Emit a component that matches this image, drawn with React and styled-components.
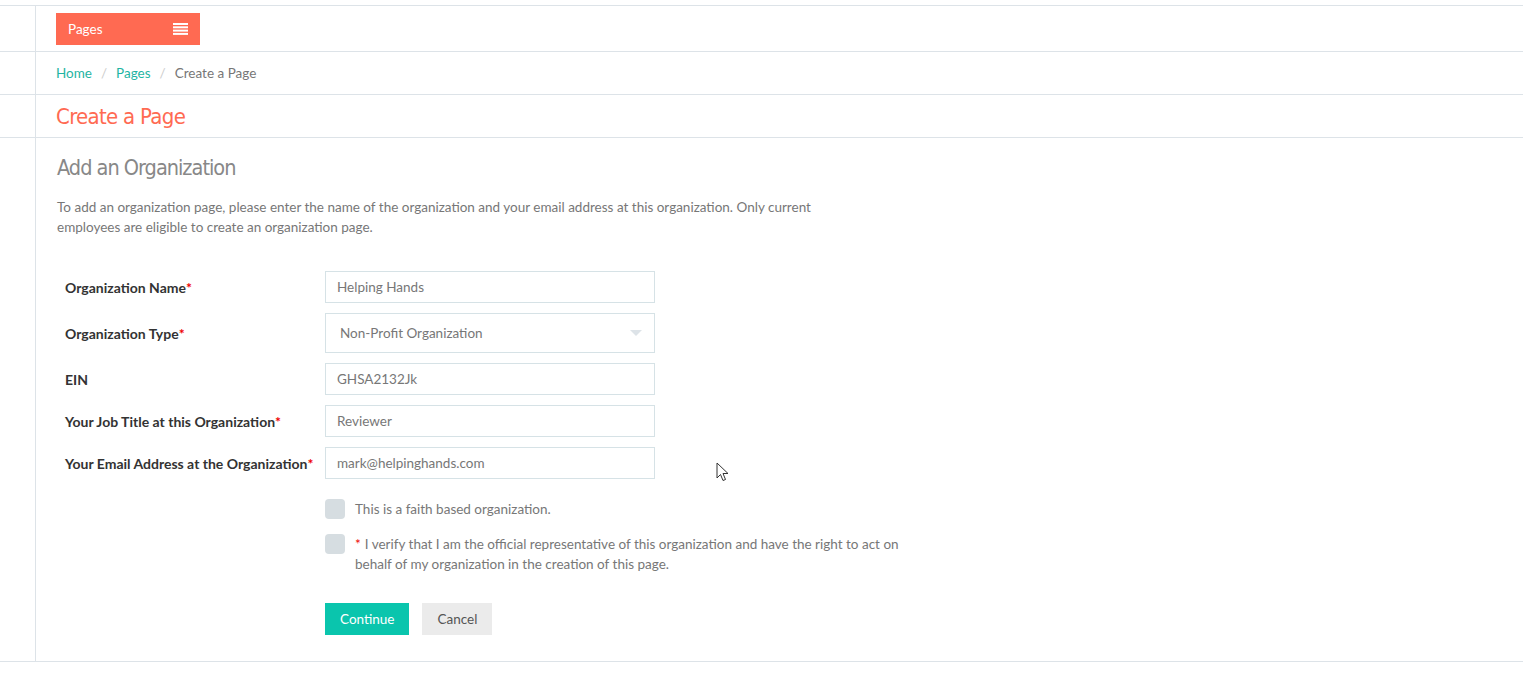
import React from "react";
import styled, { createGlobalStyle } from "styled-components";

const Global = createGlobalStyle`
  html, body { margin: 0; padding: 0; background: #fff; }
  body { font-family: Lato, "Open Sans", sans-serif; color: #777; }
  * { box-sizing: border-box; }
`;

const Page = styled.div`
  position: relative;
  padding-top: 5px;
  width: 1523px;
  min-height: 675px;
`;

const Row = styled.div`
  display: flex;
  border-top: 1px solid #dde3e8;
  ${(p) => p.$last && `border-bottom: 1px solid #dde3e8;`}
`;

const Gutter = styled.div`
  width: 36px;
  flex: none;
  border-right: 1px solid #dde3e8;
`;

const Cell = styled.div`
  flex: 1;
  padding: ${(p) => p.$pad || "0 0 0 20px"};
  height: ${(p) => (p.$h ? p.$h + "px" : "auto")};
  display: flex;
  flex-direction: column;
  justify-content: ${(p) => (p.$center ? "center" : "flex-start")};
`;

const PagesButton = styled.div`
  width: 144px;
  height: 32px;
  background: #ff6a52;
  color: #fff;
  font-size: 13.5px;
  display: flex;
  align-items: center;
  justify-content: space-between;
  padding: 0 12px;
`;

const Crumbs = styled.div`
  font-size: 13.5px;
  display: flex;
  gap: 9px;
  color: #777;
`;
const CrumbLink = styled.span`
  color: #1fb5a3;
`;
const Sep = styled.span`
  color: #ccc;
`;

const headingFont = `"DejaVu Sans Condensed", "Liberation Sans Narrow", sans-serif`;

const Title = styled.h1`
  margin: 0;
  font-family: ${headingFont};
  font-weight: normal;
  font-size: 22px;
  letter-spacing: -0.7px;
  color: #ff6a52;
`;

const SubTitle = styled.h2`
  margin: 17px 0 0 1px;
  font-family: ${headingFont};
  font-weight: normal;
  font-size: 21.5px;
  letter-spacing: -1px;
  color: #888;
`;

const Intro = styled.p`
  margin: 17px 0 0 1px;
  width: 790px;
  font-size: 13.5px;
  line-height: 20px;
  color: #777;
`;

const Form = styled.div`
  margin-top: 34px;
  display: grid;
  grid-template-columns: 260px 330px;
  row-gap: 10px;
  padding-left: 9px;
`;

const Label = styled.label`
  font-size: 14px;
  font-weight: bold;
  color: #333;
  display: flex;
  align-items: center;
`;

const Star = styled.span`
  color: #e00;
`;

const Input = styled.div`
  height: ${(p) => (p.$tall ? 40 : 32)}px;
  border: 1px solid #d6e2e6;
  font-size: 13.5px;
  color: #777;
  display: flex;
  align-items: center;
  justify-content: space-between;
  padding: 0 ${(p) => (p.$tall ? 12 : 11)}px 0 ${(p) => (p.$tall ? 14 : 11)}px;
`;

const Caret = styled.span`
  width: 0;
  height: 0;
  border-left: 6px solid transparent;
  border-right: 6px solid transparent;
  border-top: 6px solid #dde3e8;
`;

const Checks = styled.div`
  margin-top: 20px;
  margin-left: 269px;
  display: flex;
  flex-direction: column;
  gap: 15px;
`;

const CheckRow = styled.div`
  display: flex;
  gap: 10px;
  font-size: 13.5px;
  line-height: 20px;
  color: #777;
  width: 582px;
`;

const CheckText = styled.span`
  ${(p) =>
    p.$required &&
    `&::before { content: "*"; color: #e00; margin-right: 4px; }`}
`;

const Box = styled.span`
  flex: none;
  width: 20px;
  height: 20px;
  border-radius: 4px;
  background: #d6dde1;
`;

const Buttons = styled.div`
  margin: 29px 0 26px 269px;
  display: flex;
  gap: 13px;
`;

const Btn = styled.button`
  height: 32px;
  border: 0;
  padding: 0 15px;
  font-family: inherit;
  font-size: 13.5px;
  background: ${(p) => (p.$primary ? "#0ac5ad" : "#ebebeb")};
  color: ${(p) => (p.$primary ? "#fff" : "#555")};
`;

const Cursor = styled.svg`
  position: absolute;
  left: 716px;
  top: 462px;
`;

const fields = [
  { label: "Organization Name", req: true, value: "Helping Hands" },
  { label: "Organization Type", req: true, value: "Non-Profit Organization", select: true },
  { label: "EIN", value: "GHSA2132Jk" },
  { label: "Your Job Title at this Organization", req: true, value: "Reviewer" },
  { label: "Your Email Address at the Organization", req: true, value: "mark@helpinghands.com" },
];

export default function App() {
  return (
    <Page>
      <Global />
      <Row>
        <Gutter />
        <Cell $h={45} $pad="7px 0 0 20px">
          <PagesButton>
            <span>Pages</span>
            <svg width="15" height="12" viewBox="0 0 15 12">
              <g fill="#fff">
                <rect x="0" y="0" width="15" height="2" />
                <rect x="0" y="3.3" width="15" height="2" />
                <rect x="0" y="6.6" width="15" height="2" />
                <rect x="0" y="9.9" width="15" height="2" />
              </g>
            </svg>
          </PagesButton>
        </Cell>
      </Row>
      <Row>
        <Gutter />
        <Cell $h={42} $center>
          <Crumbs>
            <CrumbLink>Home</CrumbLink>
            <Sep>/</Sep>
            <CrumbLink>Pages</CrumbLink>
            <Sep>/</Sep>
            <span>Create a Page</span>
          </Crumbs>
        </Cell>
      </Row>
      <Row>
        <Gutter />
        <Cell $h={42} $center>
          <Title>Create a Page</Title>
        </Cell>
      </Row>
      <Row $last>
        <Gutter />
        <Cell>
          <SubTitle>Add an Organization</SubTitle>
          <Intro>
            To add an organization page, please enter the name of the organization and your email
            address at this organization. Only current employees are eligible to create an
            organization page.
          </Intro>
          <Form>
            {fields.map((f) => (
              <React.Fragment key={f.label}>
                <Label>
                  {f.label}
                  {f.req && <Star>*</Star>}
                </Label>
                <Input $tall={f.select}>
                  <span>{f.value}</span>
                  {f.select && <Caret />}
                </Input>
              </React.Fragment>
            ))}
          </Form>
          <Checks>
            <CheckRow>
              <Box />
              <CheckText>This is a faith based organization.</CheckText>
            </CheckRow>
            <CheckRow>
              <Box />
              <CheckText $required>
                I verify that I am the official representative of this organization and have the
                right to act on behalf of my organization in the creation of this page.
              </CheckText>
            </CheckRow>
          </Checks>
          <Buttons>
            <Btn $primary>Continue</Btn>
            <Btn>Cancel</Btn>
          </Buttons>
        </Cell>
      </Row>
      <Cursor width="13" height="21" viewBox="0 0 13 21">
        <path d="M1 1 L1 16 L4.5 12.5 L7 18.5 L9.5 17.5 L7 11.5 L12 11.5 Z" fill="#fff" stroke="#333" strokeWidth="1" strokeLinejoin="round" />
      </Cursor>
    </Page>
  );
}
